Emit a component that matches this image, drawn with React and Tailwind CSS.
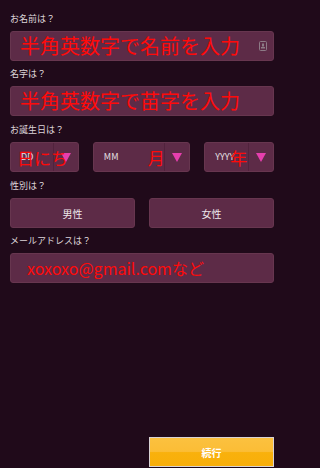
import React from "react";

const font = { fontFamily: '"Noto Sans CJK JP", "Noto Sans", sans-serif' };

function Label({ children, className = "" }) {
  return (
    <div className={"h-[12px] text-[9px] leading-[12px] text-[#dcd4d8] mb-[6px] " + className}>
      {children}
    </div>
  );
}

function Tri() {
  return (
    <svg width="10" height="9" viewBox="0 0 10 9">
      <polygon points="0,0 10,0 5,9" fill="#e63fae" />
    </svg>
  );
}

function Select({ width, placeholder, overlay, overlayClass }) {
  return (
    <div
      className={
        "relative h-[30px] flex rounded-[3px] bg-[#5d2b47] border border-[#67364f] " + width
      }
    >
      <div className="flex-1 flex items-center pl-[10px] text-[9px] text-[#e6e0e4]">{placeholder}</div>
      <div className="w-[25px] flex items-center justify-center border-l border-[#51233d]">
        <Tri />
      </div>
      <div className={"absolute top-0 bottom-0 flex items-center text-[17px] leading-none text-[#ff0a0a] " + overlayClass}>
        {overlay}
      </div>
    </div>
  );
}

export default function App() {
  return (
    <div className="w-full min-h-screen bg-[#200a1a]">
      <div style={font} className="w-[284px] min-h-[468px] bg-[#200a1a] flex flex-col px-[10px] pt-[13px] pb-[1px]">
        <Label>お名前は？</Label>
        <div className="h-[30px] flex items-center justify-between rounded-[3px] bg-[#5d2b47] border border-[#67364f] pl-[9px] pr-[6px]">
          <span className="text-[20px] leading-none text-[#ff0a0a]">半角英数字で名前を入力</span>
          <svg width="8" height="10" viewBox="0 0 8 10">
            <rect x="0.5" y="0.5" width="7" height="9" rx="1" fill="none" stroke="#8d7a86" />
            <rect x="3" y="2.5" width="2" height="3" fill="#8d7a86" />
            <rect x="2" y="6" width="4" height="1.5" fill="#8d7a86" />
          </svg>
        </div>

        <Label className="mt-[7px]">名字は？</Label>
        <div className="h-[30px] flex items-center rounded-[3px] bg-[#5d2b47] border border-[#67364f] pl-[9px]">
          <span className="text-[20px] leading-none text-[#ff0a0a]">半角英数字で苗字を入力</span>
        </div>

        <Label className="mt-[8px]">お誕生日は？</Label>
        <div className="flex gap-[14px]">
          <Select width="w-[70px]" placeholder="DD" overlay="日にち" overlayClass="left-[6px]" />
          <Select width="w-[99px]" placeholder="MM" overlay="月" overlayClass="left-[54px]" />
          <Select width="w-[71px]" placeholder="YYYY" overlay="年" overlayClass="left-[25px]" />
        </div>

        <Label className="mt-[8px]">性別は？</Label>
        <div className="grid grid-cols-2 gap-[14px]">
          <div className="h-[30px] flex items-center justify-center rounded-[3px] bg-[#5d2b47] border border-[#67364f] text-[10px] text-[#eee8ec]">男性</div>
          <div className="h-[30px] flex items-center justify-center rounded-[3px] bg-[#5d2b47] border border-[#67364f] text-[10px] text-[#eee8ec]">女性</div>
        </div>

        <Label className="mt-[7px]">メールアドレスは？</Label>
        <div className="h-[30px] flex items-center rounded-[3px] bg-[#5d2b47] border border-[#67364f] pl-[16px]">
          <span className="text-[16px] leading-none text-[#ff0a0a]">xoxoxo@gmail.comなど</span>
        </div>

        <div className="mt-auto grid grid-cols-2 gap-[14px]">
          <div />
          <div className="h-[30px] border border-[#d8d2d4] bg-[linear-gradient(to_bottom,#fbc13f_0%,#fbbd36_48%,#f9b10c_52%,#f8ae0a_100%)] flex items-center justify-center text-[10px] font-bold text-white">
            続行
          </div>
        </div>
      </div>
    </div>
  );
}
